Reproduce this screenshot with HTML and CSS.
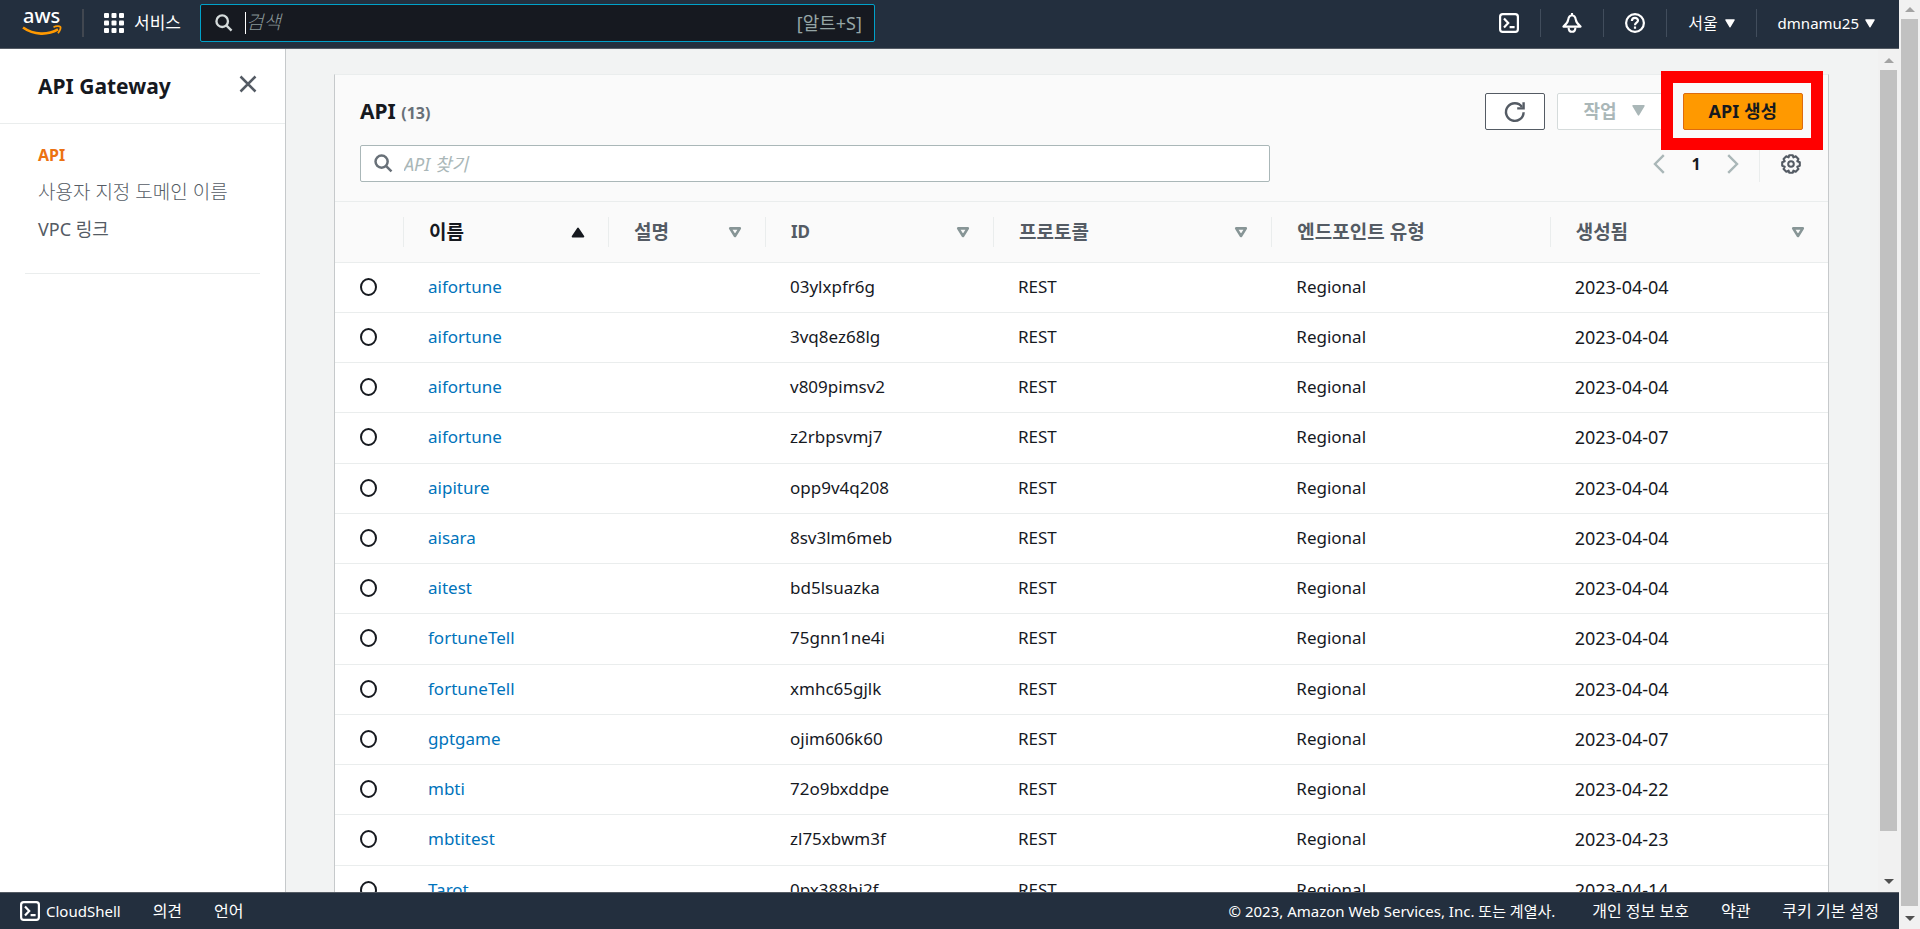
FILE: index.html
```html
<!DOCTYPE html>
<html lang="ko">
<head>
<meta charset="utf-8">
<title>API Gateway</title>
<link rel="stylesheet" href="styles.css">
</head>
<body>
<svg class="sprite" aria-hidden="true">
  <symbol id="search" viewBox="0 0 20 20"><g fill="none" stroke="currentColor" stroke-width="2.6"><circle cx="8" cy="8" r="6.4"/><path d="M12.6 12.6 18.4 18.4"/></g></symbol>
  <symbol id="shell" viewBox="0 0 20 20"><g fill="none" stroke="currentColor" stroke-width="2.2"><rect x="1.1" y="1.1" width="17.8" height="17.8" rx="2.6"/><path d="M5 5.6 9.2 10 5 14.4M10.6 14.2H15.6"/></g></symbol>
  <symbol id="caret" viewBox="0 0 12 10"><path d="M1 0h10q1.2 0 .6 1L6.6 9.4q-.6.9-1.2 0L.4 1Q-.2 0 1 0z" fill="currentColor"/></symbol>
  <symbol id="sort" viewBox="0 0 14 11"><path d="M2.2 1.4h9.6L7 9z" fill="none" stroke="currentColor" stroke-width="2.6" stroke-linejoin="round"/></symbol>
  <symbol id="sorted" viewBox="0 0 14 11"><path d="M7 1.4 12.4 9.6H1.6z" fill="currentColor" stroke="currentColor" stroke-width="1.8" stroke-linejoin="round"/></symbol>
</svg>
<div class="app">
  <header class="topbar">
    <a class="logo" href="#" aria-label="aws">
      <svg width="40" height="30" viewBox="0 0 40 30"><text class="logo-text" x="0" y="14">aws</text><g fill="none" stroke="#f90"><path d="M0 18.5C11 26.4 25 26.2 35 20.4" stroke-width="2.6"/><path d="M30.5 18.2C33 17 36.4 16.8 37.4 17.8 38 19 36.8 21.8 35 24.2" stroke-width="1.8"/></g></svg>
    </a>
    <button class="services" type="button">
      <svg width="20" height="20" viewBox="0 0 20 20" fill="currentColor"><rect width="5" height="5" rx="1"/><rect x="7.5" width="5" height="5" rx="1"/><rect x="15" width="5" height="5" rx="1"/><rect y="7.5" width="5" height="5" rx="1"/><rect x="7.5" y="7.5" width="5" height="5" rx="1"/><rect x="15" y="7.5" width="5" height="5" rx="1"/><rect y="15" width="5" height="5" rx="1"/><rect x="7.5" y="15" width="5" height="5" rx="1"/><rect x="15" y="15" width="5" height="5" rx="1"/></svg>
      서비스
    </button>
    <div class="global-search">
      <svg width="18" height="18"><use href="#search"/></svg>
      <span class="caret-line"></span>
      <input type="text" placeholder="검색" aria-label="검색">
      <span class="hint">[알트+S]</span>
    </div>
    <nav class="tools">
      <button type="button" aria-label="CloudShell"><svg width="20" height="20"><use href="#shell"/></svg></button>
      <button type="button" aria-label="알림"><svg width="20" height="20" viewBox="0 0 20 20" fill="none" stroke="currentColor" stroke-width="2.1" stroke-linejoin="round"><path d="M10 2.2C7.8 2.4 6.6 4 6.3 6.4 5.9 9.4 4.6 11 1.4 13.6H18.6C15.4 11 14.1 9.4 13.7 6.4 13.4 4 12.2 2.4 10 2.2zM10 0V3"/><path d="M6.6 14.6C6.8 20.2 13.2 20.2 13.4 14.6"/></svg></button>
      <button type="button" aria-label="도움말"><svg width="20" height="20" viewBox="0 0 20 20" fill="none" stroke="currentColor" stroke-width="2.2"><circle cx="10" cy="10" r="8.9"/><path d="M6.9 8C7 3.9 13 4 13 7.6 13 9.8 10 9.6 10 12.2M10 13.6V15.8"/></svg></button>
      <button type="button" class="region">서울 <svg width="10" height="9"><use href="#caret"/></svg></button>
      <button type="button" class="user">dmnamu25 <svg width="10" height="9"><use href="#caret"/></svg></button>
    </nav>
  </header>

  <div class="body">
    <aside class="sidebar">
      <div class="sidebar-head">
        <h2>API Gateway</h2>
        <button type="button" aria-label="닫기"><svg width="18" height="18" viewBox="0 0 18 18" stroke="currentColor" stroke-width="2.5"><path d="M1.5 1.5 16.5 16.5M16.5 1.5 1.5 16.5"/></svg></button>
      </div>
      <nav class="side-nav">
        <a class="active" href="#">API</a>
        <a class="domain" href="#">사용자 지정 도메인 이름</a>
        <a href="#">VPC 링크</a>
      </nav>
    </aside>

    <main class="content">
      <section class="card">
        <div class="card-head">
          <div class="title-row">
            <h1>API <span>(13)</span></h1>
            <div class="actions">
              <button type="button" class="btn refresh" aria-label="새로 고침"><svg width="22" height="22" viewBox="0 0 22 22" fill="none" stroke="currentColor" stroke-width="2.4"><path d="M19.6 11.2A8.8 8.8 0 1 1 18 6"/><path d="M19.6 1.2V7.4H13.2"/></svg></button>
              <button type="button" class="btn" disabled>작업 <svg width="13" height="11"><use href="#caret"/></svg></button>
              <div class="highlighted"><button type="button" class="btn primary">API 생성</button></div>
            </div>
          </div>
          <div class="filter-row">
            <div class="filter">
              <svg width="19" height="19"><use href="#search"/></svg>
              <input type="text" placeholder="API 찾기" aria-label="API 찾기">
            </div>
            <div class="pager">
              <button type="button" aria-label="이전"><svg width="12" height="20" viewBox="0 0 12 20" fill="none" stroke="currentColor" stroke-width="2.4"><path d="M10.8 1.2 2 10 10.8 18.8"/></svg></button>
              <button type="button" class="page">1</button>
              <button type="button" aria-label="다음"><svg width="12" height="20" viewBox="0 0 12 20" fill="none" stroke="currentColor" stroke-width="2.4"><path d="M1.2 1.2 10 10 1.2 18.8"/></svg></button>
              <button type="button" class="settings" aria-label="설정"><svg width="20" height="20" viewBox="0 0 20 20" fill="none" stroke="currentColor"><path stroke-width="2.1" stroke-linejoin="round" d="M8.2 1.2h3.6l.6 2.2 2.3-1.1 2.7 2.7-1.1 2.3 2.5.9v3.6l-2.5.9 1.1 2.3-2.7 2.7-2.3-1.1-.6 2.2H8.2l-.6-2.2-2.3 1.1L2.6 15l1.1-2.3-2.5-.9V8.2l2.5-.9L2.6 5l2.7-2.7 2.3 1.1z"/><circle cx="10" cy="10" r="2.8" stroke-width="2"/></svg></button>
            </div>
          </div>
        </div>
        <table>
          <colgroup><col class="c-radio"><col class="c-name"><col class="c-desc"><col class="c-id"><col><col><col></colgroup>
          <thead>
            <tr>
              <th></th>
              <th class="sorted"><div>이름 <svg width="14" height="11"><use href="#sorted"/></svg></div></th>
              <th><div>설명 <svg width="14" height="11"><use href="#sort"/></svg></div></th>
              <th class="latin"><div>ID <svg width="14" height="11"><use href="#sort"/></svg></div></th>
              <th><div>프로토콜 <svg width="14" height="11"><use href="#sort"/></svg></div></th>
              <th><div>엔드포인트 유형</div></th>
              <th><div>생성됨 <svg width="14" height="11"><use href="#sort"/></svg></div></th>
            </tr>
          </thead>
          <tbody>
            <tr><td><input type="radio" name="api" aria-label="aifortune 03ylxpfr6g"></td><td><a href="#">aifortune</a></td><td></td><td>03ylxpfr6g</td><td>REST</td><td>Regional</td><td>2023-04-04</td></tr>
            <tr><td><input type="radio" name="api" aria-label="aifortune 3vq8ez68lg"></td><td><a href="#">aifortune</a></td><td></td><td>3vq8ez68lg</td><td>REST</td><td>Regional</td><td>2023-04-04</td></tr>
            <tr><td><input type="radio" name="api" aria-label="aifortune v809pimsv2"></td><td><a href="#">aifortune</a></td><td></td><td>v809pimsv2</td><td>REST</td><td>Regional</td><td>2023-04-04</td></tr>
            <tr><td><input type="radio" name="api" aria-label="aifortune z2rbpsvmj7"></td><td><a href="#">aifortune</a></td><td></td><td>z2rbpsvmj7</td><td>REST</td><td>Regional</td><td>2023-04-07</td></tr>
            <tr><td><input type="radio" name="api" aria-label="aipiture"></td><td><a href="#">aipiture</a></td><td></td><td>opp9v4q208</td><td>REST</td><td>Regional</td><td>2023-04-04</td></tr>
            <tr><td><input type="radio" name="api" aria-label="aisara"></td><td><a href="#">aisara</a></td><td></td><td>8sv3lm6meb</td><td>REST</td><td>Regional</td><td>2023-04-04</td></tr>
            <tr><td><input type="radio" name="api" aria-label="aitest"></td><td><a href="#">aitest</a></td><td></td><td>bd5lsuazka</td><td>REST</td><td>Regional</td><td>2023-04-04</td></tr>
            <tr><td><input type="radio" name="api" aria-label="fortuneTell 75gnn1ne4i"></td><td><a href="#">fortuneTell</a></td><td></td><td>75gnn1ne4i</td><td>REST</td><td>Regional</td><td>2023-04-04</td></tr>
            <tr><td><input type="radio" name="api" aria-label="fortuneTell xmhc65gjlk"></td><td><a href="#">fortuneTell</a></td><td></td><td>xmhc65gjlk</td><td>REST</td><td>Regional</td><td>2023-04-04</td></tr>
            <tr><td><input type="radio" name="api" aria-label="gptgame"></td><td><a href="#">gptgame</a></td><td></td><td>ojim606k60</td><td>REST</td><td>Regional</td><td>2023-04-07</td></tr>
            <tr><td><input type="radio" name="api" aria-label="mbti"></td><td><a href="#">mbti</a></td><td></td><td>72o9bxddpe</td><td>REST</td><td>Regional</td><td>2023-04-22</td></tr>
            <tr><td><input type="radio" name="api" aria-label="mbtitest"></td><td><a href="#">mbtitest</a></td><td></td><td>zl75xbwm3f</td><td>REST</td><td>Regional</td><td>2023-04-23</td></tr>
            <tr><td><input type="radio" name="api" aria-label="Tarot"></td><td><a href="#">Tarot</a></td><td></td><td>0px388hi2f</td><td>REST</td><td>Regional</td><td>2023-04-14</td></tr>
          </tbody>
        </table>
      </section>
    </main>
    <div class="scrollbar inner" aria-hidden="true"><i class="up"></i><b></b><i class="down"></i></div>
  </div>

  <footer class="footer">
    <a class="cloudshell" href="#"><svg width="20" height="20"><use href="#shell"/></svg>CloudShell</a>
    <a href="#">의견</a>
    <a href="#">언어</a>
    <span class="copyright">© 2023, Amazon Web Services, Inc. 또는 계열사.</span>
    <a href="#">개인 정보 보호</a>
    <a href="#">약관</a>
    <a href="#">쿠키 기본 설정</a>
  </footer>
</div>
<div class="scrollbar outer" aria-hidden="true"><i class="up"></i><b></b><i class="down"></i></div>
</body>
</html>
```
FILE: styles.css
```css
* { box-sizing: border-box; }
body {
  margin: 0;
  height: 100vh;
  display: flex;
  overflow: hidden;
  font: 17px/24px "Noto Sans", "Noto Sans CJK KR", sans-serif;
  color: #16191f;
}
button, input { font: inherit; color: inherit; }
button { background: none; border: 0; padding: 0; white-space: nowrap; }
a { text-decoration: none; color: inherit; }
svg { display: block; flex: none; overflow: visible; }
h1, h2 { margin: 0; font-size: 21px; line-height: 28px; font-weight: 700; }
.sprite { position: absolute; width: 0; height: 0; overflow: hidden; }
.app { flex: 1; min-width: 0; display: flex; flex-direction: column; }

/* top bar */
.topbar {
  display: flex;
  align-items: center;
  height: 49px;
  flex: none;
  padding: 0 0 2px 23px;
  background: #232f3e;
  border-bottom: 1px solid #545b64;
  color: #fff;
}
.logo { padding-right: 19px; height: 28px; border-right: 2px solid #414750; }
.logo-text { font: 500 20px "Noto Sans", sans-serif; fill: #fff; }
.services { display: flex; align-items: center; gap: 10px; padding: 0 19px 0 20px; }
.global-search {
  flex: 0 1 675px;
  min-width: 0;
  height: 38px;
  display: flex;
  align-items: center;
  padding: 0 12px 0 14px;
  background: #161920;
  border: 1px solid #00a1c9;
  border-radius: 2px;
  color: #d5dbdb;
}
.caret-line { width: 1px; height: 22px; margin-left: 12px; background: #fff; }
.global-search input {
  flex: 1;
  min-width: 0;
  padding: 0 0 2px;
  border: 0;
  outline: 0;
  background: none;
  font-size: 19px;
}
.global-search input::placeholder { color: #879596; opacity: 1; font-style: italic; font-weight: 300; }
.hint { font-size: 18px; color: #95a5a6; }
.tools { display: flex; margin-left: auto; padding-right: 3px; }
.tools button {
  display: flex;
  align-items: center;
  height: 28px;
  padding: 0 21px;
  gap: 7px;
  border-left: 1px solid #414d5c;
  font-size: 16px;
}
.tools button:first-child { border-left: 0; }
.tools .user { gap: 6px; font-size: 15px; }

/* side navigation */
.body { flex: 1; min-height: 0; display: flex; overflow: hidden; background: #f2f3f3; }
.sidebar {
  width: 286px;
  flex: none;
  background: #fff;
  border-right: 1px solid #c6c9cb;
  color: #545b64;
}
.sidebar-head {
  display: flex;
  justify-content: space-between;
  align-items: flex-start;
  padding: 23px 28px 23px 38px;
  border-bottom: 1px solid #eaeded;
  color: #16191f;
}
.sidebar-head button { color: #545b64; padding-top: 3px; }
.side-nav {
  display: flex;
  flex-direction: column;
  gap: 9px;
  margin: 0 25px;
  padding: 17px 13px 30px;
  border-bottom: 1px solid #eaeded;
  font-size: 18px;
  line-height: 28px;
  white-space: nowrap;
}
.side-nav .active { font-size: 16px; font-weight: 700; color: #ec7211; }
.side-nav .domain { font-size: 19px; font-weight: 300; }

/* card */
.content { flex: 1; min-width: 0; padding: 25px 49px 0 48px; }
.card {
  background: #fff;
  border: 1px solid #eaeded;
  border-left-color: #c6c9cb;
  border-right-color: #c6c9cb;
}
.card-head { background: #fafafa; padding: 18px 25px 19px; border-bottom: 1px solid #eaeded; }
.title-row, .filter-row { display: flex; justify-content: space-between; align-items: center; }
.filter-row { margin-top: 15px; }
h1 span { font-size: 16px; color: #687078; }
.actions { display: flex; gap: 12px; }
.btn {
  display: flex;
  align-items: center;
  justify-content: center;
  gap: 15px;
  height: 37px;
  padding: 0 25px 2px;
  background: #fff;
  border: 1px solid #545b64;
  border-radius: 2px;
  font-size: 18px;
  font-weight: 700;
}
.btn:disabled { color: #aab7b8; border-color: #d5dbdb; }
.refresh { padding: 0 18px; color: #545b64; }
.primary { background: #f90; border-color: #dd6b10; }
.highlighted { position: relative; }
.highlighted::after {
  content: "";
  position: absolute;
  inset: -22px -20px -20px -22px;
  border: 12px solid #f00;
  pointer-events: none;
}
.filter {
  flex: 0 1 910px;
  display: flex;
  align-items: center;
  gap: 9px;
  height: 37px;
  padding: 0 13px;
  background: #fff;
  border: 1px solid #aab7b8;
  border-radius: 2px;
  color: #687078;
}
.filter input { flex: 1; min-width: 0; border: 0; outline: 0; padding: 0 2px; background: none; font-size: 18px; }
.filter input::placeholder { color: #aab7b8; opacity: 1; font-style: italic; }
.pager { display: flex; align-items: center; color: #aab7b8; }
.page { width: 62px; font-weight: 700; color: #16191f; font-size: 16px; }
.settings {
  height: 37px;
  margin-left: 20px;
  padding: 0 2px 0 21px;
  border-left: 1px solid #eaeded;
  color: #545b64;
}

/* table */
table { width: 100%; table-layout: fixed; border-collapse: separate; border-spacing: 0; }
.c-radio { width: 68px; }
.c-name { width: 205px; }
.c-desc { width: 157px; }
.c-id { width: 228px; }
th {
  height: 61px;
  padding: 0;
  background: #fafafa;
  border-bottom: 1px solid #eaeded;
  color: #545b64;
  font-size: 19px;
  text-align: left;
  white-space: nowrap;
}
th div {
  display: flex;
  align-items: center;
  justify-content: space-between;
  height: 30px;
  padding: 0 23px 0 25px;
  border-left: 1px solid #eaeded;
}
th svg { color: #879596; }
th.latin { font-size: 17px; }
.sorted, .sorted svg { color: #16191f; }
td { height: 50px; padding: 0 0 2px 25px; border-bottom: 1px solid #eaeded; white-space: nowrap; }
td:last-child { font-size: 18px; }
tr:nth-child(4n) td { height: 51px; }
td a { color: #0073bb; }
td input {
  appearance: none;
  display: block;
  width: 17px;
  height: 18px;
  margin: 0;
  border: 2px solid #16191f;
  border-radius: 50%;
  background: #fff;
}

/* scrollbars */
.scrollbar {
  width: 21px;
  flex: none;
  display: flex;
  flex-direction: column;
  align-items: center;
  background: #f1f1f1;
}
.scrollbar b { width: 17px; background: #c1c1c1; }
.scrollbar i { border: 5px solid transparent; border-top: 0; }
.scrollbar .up { margin: 7px 0; border-bottom-color: #a3a3a3; }
.scrollbar .down { margin: auto 0 8px; border-bottom: 0; border-top: 5px solid #505050; }
.outer b { flex: 0 0 95.5%; }
.outer { height: 100vh; }
.inner .up { margin: 9px 0 7px; }
.inner b { flex: 0 0 90.3%; }

/* footer */
.footer {
  display: flex;
  align-items: center;
  gap: 32px;
  height: 37px;
  flex: none;
  padding: 0 20px;
  background: #232f3e;
  border-top: 1px solid #545b64;
  color: #fff;
  font-size: 16px;
  white-space: nowrap;
}
.cloudshell { display: flex; align-items: center; gap: 6px; font-size: 15px; }
.copyright { margin: 0 5px 0 auto; font-size: 15px; }
```
